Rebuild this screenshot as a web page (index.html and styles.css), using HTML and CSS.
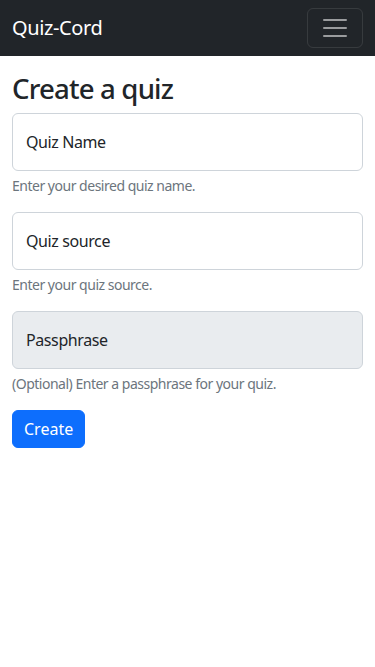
FILE: index.html
```html
<!DOCTYPE html>
<html lang="en">
<head>
    <meta charset="UTF-8">
    <meta name="viewport" content="width=device-width, initial-scale=1.0">
    <title>Quiz-Cord - Create a quiz</title>
    <link rel="stylesheet" href="styles.css">
</head>
<body>
    <nav class="navbar">
        <a class="brand" href="#">Quiz-Cord</a>
        <button class="toggler" type="button" aria-label="Toggle navigation">
            <svg width="30" height="30" viewBox="0 0 30 30">
                <path d="M4 7h22M4 15h22M4 23h22" stroke="rgba(255,255,255,0.55)" stroke-width="2" stroke-linecap="round"/>
            </svg>
        </button>
    </nav>

    <main class="container">
        <h1>Create a quiz</h1>
        <form>
            <div class="field">
                <div class="floating">
                    <input type="text" id="quizName" class="control">
                    <label for="quizName">Quiz Name</label>
                </div>
                <div class="form-text">Enter your desired quiz name.</div>
            </div>
            <div class="field">
                <div class="floating">
                    <input type="text" id="quizSource" class="control">
                    <label for="quizSource">Quiz source</label>
                </div>
                <div class="form-text">Enter your quiz source.</div>
            </div>
            <div class="field">
                <div class="floating">
                    <input type="text" id="passphrase" class="control readonly" readonly>
                    <label for="passphrase">Passphrase</label>
                </div>
                <div class="form-text">(Optional) Enter a passphrase for your quiz.</div>
            </div>
            <button type="submit" class="btn-primary">Create</button>
        </form>
    </main>
</body>
</html>
```

FILE: styles.css
```css
* {
    box-sizing: border-box;
}
body {
    margin: 0;
    font-family: "Segoe UI", "Noto Sans", Roboto, sans-serif;
    font-size: 16px;
    line-height: 1.5;
    color: #212529;
    background: #fff;
    letter-spacing: -0.025em;
}
.navbar {
    background: #212529;
    height: 56px;
    padding: 0 12px;
    display: flex;
    align-items: center;
    justify-content: space-between;
}
.brand {
    color: #fff;
    font-size: 20px;
    text-decoration: none;
    line-height: 30px;
}
.toggler {
    width: 56px;
    height: 40px;
    background: transparent;
    border: 1px solid rgba(255, 255, 255, 0.1);
    border-radius: 6px;
    display: flex;
    align-items: center;
    justify-content: center;
    padding: 0;
}
.container {
    padding: 16px 12px;
}
h1 {
    margin: 0 0 8px;
    font-size: 27.6px;
    font-weight: 500;
    line-height: 1.2;
    letter-spacing: -0.03em;
}
.field {
    margin-bottom: 16px;
}
.floating {
    position: relative;
}
.control {
    display: block;
    width: 100%;
    height: 58px;
    padding: 16px 12px;
    font: inherit;
    color: #212529;
    background: #fff;
    border: 1px solid #ced4da;
    border-radius: 6px;
}
.control.readonly {
    background: #e9ecef;
}
.floating label {
    position: absolute;
    top: 0;
    left: 0;
    height: 100%;
    padding: 16px 13px;
    border: 1px solid transparent;
    display: flex;
    align-items: center;
    pointer-events: none;
}
.form-text {
    margin-top: 4px;
    font-size: 14px;
    color: #6c757d;
    letter-spacing: -0.035em;
}
.btn-primary {
    font: inherit;
    color: #fff;
    background: #0d6efd;
    border: 1px solid #0d6efd;
    border-radius: 6px;
    padding: 6px 11px;
    height: 38px;
}
```
